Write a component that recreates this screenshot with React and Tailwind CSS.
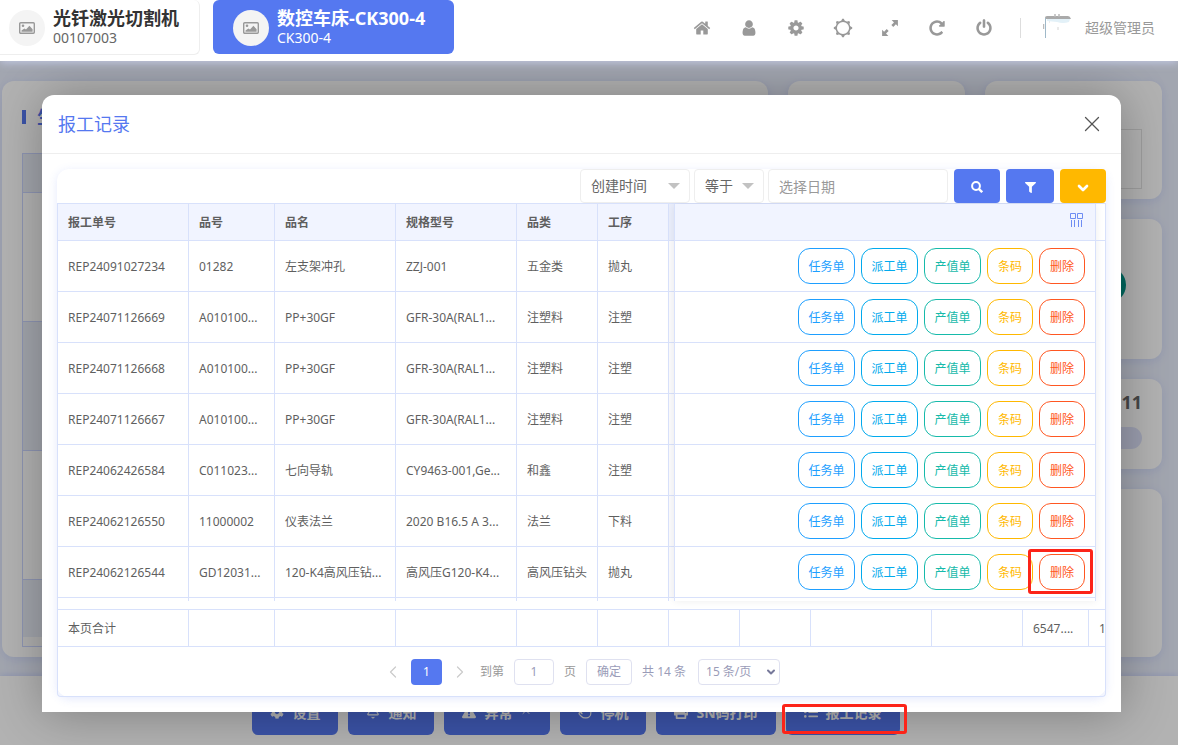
import React from "react";
import { FaCog, FaExclamationTriangle, FaFilter, FaPrint, FaListUl } from "react-icons/fa";
import { Bell, ChevronDown, ChevronLeft, ChevronRight, ChevronUp, Hand, X } from "lucide-react";

const rows = [
  ["REP24091027234", "01282", "左支架冲孔", "ZZJ-001", "五金类", "抛丸"],
  ["REP24071126669", "A010100...", "PP+30GF", "GFR-30A(RAL1...", "注塑料", "注塑"],
  ["REP24071126668", "A010100...", "PP+30GF", "GFR-30A(RAL1...", "注塑料", "注塑"],
  ["REP24071126667", "A010100...", "PP+30GF", "GFR-30A(RAL1...", "注塑料", "注塑"],
  ["REP24062426584", "C011023...", "七向导轨", "CY9463-001,Ge...", "和鑫", "注塑"],
  ["REP24062126550", "11000002", "仪表法兰", "2020 B16.5 A 3...", "法兰", "下料"],
  ["REP24062126544", "GD12031...", "120-K4高风压钻...", "高风压G120-K4...", "高风压钻头", "抛丸"],
];

const headers = ["报工单号", "品号", "品名", "规格型号", "品类", "工序"];

const actions = [
  ["任务单", "w-[57px] border-[#1e9fff] text-[#1e9fff]"],
  ["派工单", "w-[57px] border-[#01aaed] text-[#01aaed]"],
  ["产值单", "w-[57px] border-[#16baaa] text-[#16baaa]"],
  ["条码", "w-[46px] border-[#ffb800] text-[#ffb800]"],
  ["删除", "w-[46px] border-[#ff5722] text-[#ff5722]"],
];

const totals = ["本页合计", "", "", "", "", "", "", "", "", "", "6547....", "1"];

const navIcons = {
  首页:
    "M1472 992v480q0 26-19 45t-45 19h-384v-384h-256v384h-384q-26 0-45-19t-19-45v-480q0-1 .5-3t.5-3l575-474 575 474q1 2 1 6zm223-69l-62 74q-8 9-21 11h-3q-13 0-21-7l-692-577-692 577q-12 8-24 7-13-2-21-11l-62-74q-8-10-7-23.5t11-21.5l719-599q32-26 76-26t76 26l244 204v-195q0-14 9-23t23-9h192q14 0 23 9t9 23v408l219 182q10 8 11 21.5t-7 23.5z",
  用户:
    "M1536 1399q0 109-62.5 187t-150.5 78h-854q-88 0-150.5-78t-62.5-187q0-85 8.5-160.5t31.5-152 58.5-131 94-89 134.5-34.5q131 128 313 128t313-128q76 0 134.5 34.5t94 89 58.5 131 31.5 152 8.5 160.5zm-256-887q0 159-112.5 271.5t-271.5 112.5-271.5-112.5-112.5-271.5 112.5-271.5 271.5-112.5 271.5 112.5 112.5 271.5z",
  设置:
    "M1152 896q0-106-75-181t-181-75-181 75-75 181 75 181 181 75 181-75 75-181zm512-109v222q0 12-8 23t-20 13l-185 28q-19 54-39 91 35 50 107 138 10 12 10 25t-9 23q-27 37-99 108t-94 71q-12 0-26-9l-138-108q-44 23-91 38-16 136-29 186-7 28-36 28h-222q-14 0-24.5-8.5t-11.5-21.5l-28-184q-49-16-90-37l-141 107q-10 9-25 9-14 0-25-11-126-114-165-168-7-10-7-23 0-12 8-23 15-21 51-66.5t54-70.5q-27-50-41-99l-183-27q-13-2-21-12.5t-8-23.5v-222q0-12 8-23t19-13l186-28q14-46 39-92-40-57-107-138-10-12-10-24 0-10 9-23 26-36 98.5-107.5t94.5-71.5q13 0 26 10l138 107q44-23 91-38 16-136 29-186 7-28 36-28h222q14 0 24.5 8.5t11.5 21.5l28 184q49 16 90 37l142-107q9-9 24-9 13 0 25 10 129 119 165 170 7 8 7 22 0 12-8 23-15 21-51 66.5t-54 70.5q26 50 41 98l183 28q13 2 21 12.5t8 23.5z",
  主题: null,
  全屏:
    "M1060 110h622v622l-200-200-260 260-190-190 260-260zM732 1682H110V1060l200 200 260-260 190 190-260 260z",
  刷新:
    "M1664 256v448q0 26-19 45t-45 19h-448q-42 0-59-40-17-39 14-69l138-138q-148-137-349-137-104 0-198.5 40.5t-163.5 109.5-109.5 163.5-40.5 198.5 40.5 198.5 109.5 163.5 163.5 109.5 198.5 40.5q119 0 225-52t179-147q7-10 23-12 15 0 25 9l137 138q9 8 9.5 20.5t-7.5 22.5q-109 132-264 204.5t-327 72.5q-156 0-298-61t-245-164-164-245-61-298 61-298 164-245 245-164 298-61q147 0 284.5 55.5t244.5 156.5l130-129q29-31 70-14 39 17 39 59z",
  退出:
    "M1664 896q0 156-61 298t-164 245-245 164-298 61-298-61-245-164-164-245-61-298q0-182 80.5-343t226.5-270q43-32 95.5-25t83.5 50q32 42 24.5 94.5t-49.5 84.5q-98 74-151.5 181t-53.5 228q0 104 40.5 198.5t109.5 163.5 163.5 109.5 198.5 40.5 198.5-40.5 163.5-109.5 109.5-163.5 40.5-198.5q0-121-53.5-228t-151.5-181q-42-32-49.5-84.5t24.5-94.5q31-43 84-50t95 25q146 109 226.5 270t80.5 343zm-640-768v640q0 52-38 90t-90 38-90-38-38-90v-640q0-52 38-90t90-38 90 38 38 90z",
};

function SunRing() {
  const teeth = [0, 45, 90, 135, 180, 225, 270, 315];
  return (
    <svg viewBox="0 0 20 20" className="size-5" fill="none">
      <circle cx="10" cy="10" r="6.8" stroke="currentColor" strokeWidth="1.5" />
      {teeth.map((a) => (
        <path key={a} d="M8 3.2 9.2 .8h1.600L12 3.2z" fill="currentColor" transform={`rotate(${a} 10 10)`} />
      ))}
    </svg>
  );
}

function Picture() {
  return (
    <span className="flex size-9 shrink-0 items-center justify-center rounded-full bg-[#f4f4f4]">
      <svg viewBox="0 0 16 12" className="h-3 w-4" fill="none">
        <rect x=".7" y=".7" width="14.6" height="10.6" rx="1" stroke="#999" strokeWidth="1.4" />
        <circle cx="4" cy="3.8" r="1.3" fill="#999" />
        <path d="M2.5 9.8V8.6L5.4 6.4l1.6 1 3.4-3.6 3.2 3.4v2.6z" fill="#999" />
      </svg>
    </span>
  );
}

function Header() {
  return (
    <header className="relative z-20 flex h-[61px] items-start bg-white shadow-[0_2px_8px_rgba(205,212,245,0.7)]">
      <a href="#m1" className="flex h-[55px] w-[200px] shrink-0 items-center gap-2 rounded-r-md border border-l-0 border-t-0 border-[#eee] pl-[9px] pt-px">
        <Picture />
        <span className="text-[#333]">
          <b className="block text-[18px] leading-[20px]">光钎激光切割机</b>
          <span className="block text-[14px] leading-[19px] text-[#666]">00107003</span>
        </span>
      </a>
      <a href="#m2" className="ml-[13px] flex h-[54px] w-[241px] shrink-0 items-center gap-2 rounded-md bg-[#5578f0] pl-5 pt-px text-white">
        <Picture />
        <span>
          <b className="block whitespace-nowrap text-[18px] leading-[20px]">数控车床-CK300-4</b>
          <span className="block text-[14px] leading-[19px]">CK300-4</span>
        </span>
      </a>
      <nav className="ml-auto flex h-14 items-center pr-[23px] text-[#999]">
        {Object.entries(navIcons).map(([name, d]) => (
          <button key={name} aria-label={name} className="flex h-10 w-[47px] items-center justify-center">
            {d ? (
              <svg viewBox="0 0 1792 1792" className="size-[18px]" fill="currentColor">
                <path d={d} />
              </svg>
            ) : (
              <SunRing />
            )}
          </button>
        ))}
        <span className="ml-[13px] mr-[22px] h-5 w-px bg-[#ddd]" />
        <svg viewBox="0 0 28 28" className="mr-[14px] size-7" fill="none">
          <path d="M2 3.500Q2 2 4 2H25Q27 2 28 5H3z" fill="#aaa" />
          <path d="M4 5H27L26 8Q20 10 14 8L4 7z" fill="#e3f1f8" />
          <path d="M2.500 4V24" stroke="#9fb9c9" />
          <path d="M.5 10v5M12 0v3M16 0v3" stroke="#bbb" strokeWidth="1.5" />
          <path d="M6 8h1M15 13v3" stroke="#ddd" strokeWidth="1.2" />
        </svg>
        <span className="whitespace-nowrap text-[14px] leading-5 text-[#999]">超级管理员</span>
      </nav>
    </header>
  );
}

function Dashboard() {
  const card = "rounded-xl bg-white shadow-[0_2px_10px_rgba(85,120,240,0.15)]";
  const line = "border-b border-[#ccd6ff]";
  return (
    <main className="flex flex-1 gap-5 bg-[#e9eefd] pb-[19px] pl-0.5 pr-4 pt-5">
      <section className={`${card} flex-1 px-5 pb-2.5 pt-[26px]`}>
        <h2 className="flex h-5 items-center gap-[11px] text-[18px] font-bold leading-5 text-[#5578f0]">
          <span className="h-3.5 w-1 bg-[#5578f0]" />
          生产
        </h2>
        <div className="mt-[26px] border border-[#ccd6ff]">
          <div className={`h-[39px] bg-[#e9ecf7] ${line}`} />
          <div className={`h-[129px] ${line}`} />
          <div className={`h-[129px] bg-[#e9ecf7] ${line}`} />
          <div className={`h-[129px] ${line}`} />
          <div className="h-[57px] bg-[#e9ecf7]" />
          <div className="h-[9px] bg-[#fbfbfb]" />
        </div>
      </section>
      <section className="flex w-[177px] flex-col gap-5">
        <div className={`${card} h-[118px]`} />
        <div className={`${card} flex-1`} />
      </section>
      <section className="flex w-[177px] flex-col gap-5">
        <div className={`${card} h-[118px] px-5 pt-12`}>
          <div className="h-[60px] border border-[#e2e2e2]" />
        </div>
        <div className={`${card} flex h-[140px] justify-end pr-9 pt-12`}>
          <span className="size-9 rounded-full bg-[#009688]" />
        </div>
        <div className={`${card} h-[90px] px-5 pt-[13px]`}>
          <div className="text-right text-[18px] font-bold leading-5 text-[#666]">11</div>
          <div className="mt-[15px] h-[22px] rounded-full bg-[#dfe3fb]" />
        </div>
        <div className={`${card} flex-1`} />
      </section>
    </main>
  );
}

function Footer() {
  const items = [
    [FaCog, "设置"],
    [Bell, "通知"],
    [FaExclamationTriangle, "异常"],
    [Hand, "停机"],
    [FaPrint, "SN码打印"],
    [FaListUl, "报工记录"],
  ];
  return (
    <footer className="flex h-[69px] items-start justify-center gap-2.5 bg-white pr-[26px] pt-[13px] shadow-[0_-1px_6px_rgba(85,120,240,0.2)]">
      {items.map(([Icon, text]) => (
        <button key={text} className="flex h-[46px] items-center gap-2 whitespace-nowrap rounded-md bg-[#5578f0] px-[18px] text-[14px] font-bold text-white">
          <Icon className="size-3.5" />
          {text}
          {text === "异常" && <ChevronUp className="size-3" />}
        </button>
      ))}
    </footer>
  );
}

function Picker({ label, value, width }) {
  return (
    <div className={`relative ${width}`}>
      <select aria-label={label} className="h-[34px] w-full appearance-none rounded-sm border border-[#eee] bg-white pl-[10px] text-[14px] text-[#666]">
        <option>{value}</option>
      </select>
      <svg viewBox="0 0 12 6" className="pointer-events-none absolute right-[10px] top-[14px] h-1.5 w-3">
        <path d="M0 0H12L6 6z" fill="#c2c2c2" />
      </svg>
    </div>
  );
}

function Toolbar() {
  const btn = "flex h-[34px] items-center justify-center rounded-sm text-white";
  return (
    <div className="flex h-[34px] items-center justify-end gap-1.5">
      <div className="flex gap-1">
        <Picker label="字段" value="创建时间" width="w-[110px]" />
        <Picker label="条件" value="等于" width="w-[70px]" />
        <input aria-label="日期" placeholder="选择日期" className="h-[34px] w-[180px] rounded-sm border border-[#eee] bg-white px-[10px] text-[14px] text-[#666] placeholder:text-[#999]" />
      </div>
      <button aria-label="搜索" className={`${btn} w-[46px] bg-[#5578f0]`}>
        <svg viewBox="0 0 12 12" className="mt-0.5 size-3" fill="none" stroke="currentColor" strokeWidth="2">
          <circle cx="5" cy="5" r="3.9" />
          <path d="M7.8 7.8 11.2 11.2" strokeWidth="2.4" />
        </svg>
      </button>
      <button aria-label="筛选" className={`${btn} w-12 bg-[#5578f0]`}>
        <FaFilter className="mt-0.5 size-[11px]" />
      </button>
      <button aria-label="展开" className={`${btn} w-[46px] bg-[#ffb800]`}>
        <ChevronDown className="mt-1 size-4" strokeWidth={4} />
      </button>
    </div>
  );
}

const cell = "border-b border-r border-[#d8e1fb] p-0";

function Records() {
  return (
    <div className="flex border-t border-[#d8e1fb]">
      <div className="w-[616px] shrink-0 overflow-hidden">
        <table className="w-[682px] table-fixed border-separate border-spacing-0 text-left">
          <colgroup>
            <col className="w-[131px]" />
            <col className="w-[86px]" />
            <col className="w-[121px]" />
            <col className="w-[121px]" />
            <col className="w-[81px]" />
            <col className="w-[71px]" />
            <col className="w-[71px]" />
          </colgroup>
          <thead>
            <tr>
              {headers.map((h) => (
                <th key={h} className={`${cell} h-[37px] bg-[#f1f4ff] pl-[10px] pt-0.5 font-semibold`}>{h}</th>
              ))}
              <td className={`${cell} bg-[#e9edfb]`} />
            </tr>
          </thead>
          <tbody>
            {rows.map((r) => (
              <tr key={r[0]}>
                {r.map((v, i) => (
                  <td key={i} className={`${cell} h-[51px] whitespace-nowrap pl-[10px] pt-0.5`}>{v}</td>
                ))}
                <td className={`${cell} bg-[#fafafc]`} />
              </tr>
            ))}
            <tr>
              {[...headers, "end"].map((h) => (
                <td key={h} className="h-[3px] border-r border-[#d8e1fb] p-0" />
              ))}
            </tr>
          </tbody>
        </table>
      </div>
      <div className="flex-1 border-l border-[#d8e1fb] shadow-[0_0_8px_rgba(0,0,0,0.07)]">
        <table className="w-full table-fixed border-separate border-spacing-0">
          <thead>
            <tr>
              <th className={`${cell} h-[37px] bg-[#f1f4ff]`}>
                <button aria-label="筛选列" className="mb-1 mr-[12px] ml-auto block text-[#6f8df3]">
                  <svg viewBox="0 0 14 14" className="size-3.5" fill="none" stroke="currentColor">
                    <path d="M1.500 .5H6.500V5.500H1.500zM8.500 .5H13.500V5.500H8.500zM2.500 7V14M5.500 7V14M9.500 7V14M12.500 7V14" />
                  </svg>
                </button>
              </th>
            </tr>
          </thead>
          <tbody>
            {rows.map((r, n) => (
              <tr key={r[0]}>
                <td className={`${cell} h-[51px]`}>
                  <div className="flex justify-end gap-1.5 pr-[10px]">
                    {actions.map(([text, style]) => (
                      <div key={text} className="relative">
                        <button className={`block h-9 rounded-xl border pt-0.5 ${style}`}>{text}</button>
                        {n === 6 && text === "删除" && (
                          <span className="pointer-events-none absolute -bottom-1 -left-[11px] -right-2 -top-[5px] rounded-[3px] border-[3px] border-[#fc2419]" />
                        )}
                      </div>
                    ))}
                  </div>
                </td>
              </tr>
            ))}
            <tr>
              <td className="h-[3px] border-r border-[#d8e1fb] p-0" />
            </tr>
          </tbody>
        </table>
      </div>
      <div className="w-[9px] shrink-0">
        <div className="h-[37px] border-b border-[#d8e1fb]" />
      </div>
    </div>
  );
}

function Totals() {
  return (
    <div className="mt-2 overflow-hidden border-t border-[#d8e1fb]">
      <table className="w-[1101px] table-fixed border-separate border-spacing-0">
        <colgroup>
          <col className="w-[131px]" />
          <col className="w-[86px]" />
          <col className="w-[121px]" />
          <col className="w-[121px]" />
          <col className="w-[81px]" />
          <col className="w-[71px]" />
          <col className="w-[71px]" />
          <col className="w-[71px]" />
          <col className="w-[121px]" />
          <col className="w-[91px]" />
          <col className="w-[66px]" />
          <col className="w-[70px]" />
        </colgroup>
        <tbody>
          <tr>
            {totals.map((t, i) => (
              <td key={i} className={`${cell} h-[37px] whitespace-nowrap pl-[10px] pt-0.5`}>{t}</td>
            ))}
          </tr>
        </tbody>
      </table>
    </div>
  );
}

function Pagination() {
  const box = "h-[26px] rounded-sm border border-[#dfe1f0] bg-white text-[#9a9cb8]";
  return (
    <div className="flex h-[49px] items-center justify-center gap-2 pr-0.5 text-[#999]">
      <div className="flex items-center gap-1.5">
        <button aria-label="上一页" className="flex w-6 justify-center text-[#ccc]"><ChevronLeft className="size-5" strokeWidth={1.5} /></button>
        <button className="h-[26px] w-[31px] rounded-sm bg-[#5578f0] text-white">1</button>
        <button aria-label="下一页" className="flex w-6 justify-center text-[#ccc]"><ChevronRight className="size-5" strokeWidth={1.5} /></button>
      </div>
      <div className="flex items-center gap-[10px]">
        <label htmlFor="page">到第</label>
        <input id="page" defaultValue="1" className={`${box} w-10 text-center`} />
        <span>页</span>
        <button className={`${box} w-[46px]`}>确定</button>
        <span className="w-[46px] whitespace-nowrap text-[#9a9cb8]">共 14 条</span>
        <div className="relative">
          <select aria-label="每页条数" className={`${box} w-[82px] appearance-none pl-[7px]`}>
            <option>15 条/页</option>
          </select>
          <ChevronDown className="pointer-events-none absolute right-[3px] top-[7px] size-3 text-[#77799a]" strokeWidth={4} />
        </div>
      </div>
    </div>
  );
}

function Modal() {
  return (
    <div role="dialog" aria-label="报工记录" className="absolute left-[42px] right-[57px] top-[95px] z-10 rounded-t-xl bg-white text-[12px] leading-5 text-[#5f5f5f] shadow-[1px_1px_50px_rgba(0,0,0,0.3)]">
      <div className="flex h-[59px] items-center justify-between border-b border-[#eee] px-4">
        <h1 className="text-[18px] text-[#5578f0]">报工记录</h1>
        <button aria-label="关闭" className="text-[#555]"><X className="size-[26px]" strokeWidth={1.2} /></button>
      </div>
      <div className="p-[15px]">
        <div className="rounded-xl shadow-[0_2px_10px_rgba(85,120,240,0.16)]">
          <Toolbar />
          <div className="overflow-hidden rounded-b-sm border-x border-b border-[#d8e1fb]">
            <Records />
            <Totals />
            <Pagination />
          </div>
        </div>
      </div>
    </div>
  );
}

export default function App() {
  return (
    <div className="relative flex min-h-screen flex-col overflow-hidden bg-white font-['Noto_Sans','Noto_Sans_CJK_SC',sans-serif]">
      <Header />
      <Dashboard />
      <Footer />
      <div className="absolute inset-0 bg-black/30" />
      <Modal />
      <span className="pointer-events-none absolute left-[782px] top-[704px] z-20 h-[30px] w-[125px] rounded-[3px] border-[3px] border-[#fc2419]" />
    </div>
  );
}
